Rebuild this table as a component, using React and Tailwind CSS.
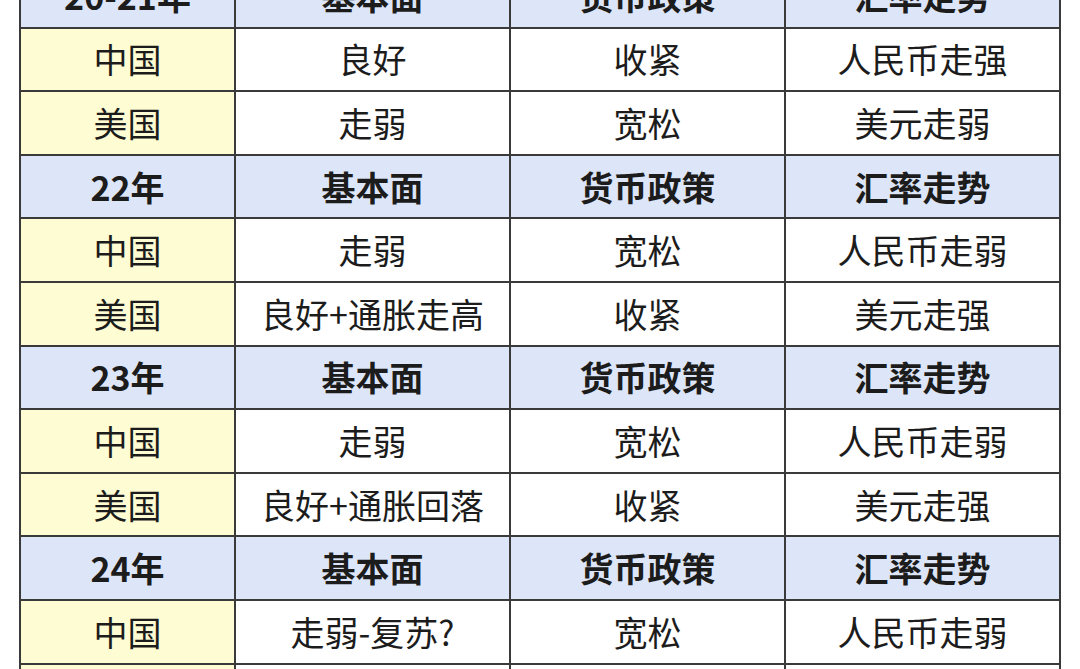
import React from 'react';

const SECTIONS = [
  { year: '20-21年', rows: [['中国', '良好', '收紧', '人民币走强'], ['美国', '走弱', '宽松', '美元走弱']] },
  { year: '22年', rows: [['中国', '走弱', '宽松', '人民币走弱'], ['美国', '良好+通胀走高', '收紧', '美元走强']] },
  { year: '23年', rows: [['中国', '走弱', '宽松', '人民币走弱'], ['美国', '良好+通胀回落', '收紧', '美元走强']] },
  { year: '24年', rows: [['中国', '走弱-复苏?', '宽松', '人民币走弱'], ['美国', '', '', '']] },
];

const HEADERS = ['基本面', '货币政策', '汇率走势'];

const cell = 'border-2 border-[#3a3a3a] h-[63.6px] p-0 text-center align-middle';

export default function App() {
  return (
    <div
      className="w-[1080px] h-[669px] overflow-hidden bg-white text-[#1c1c1c]"
      style={{ fontFamily: '"Noto Sans CJK SC", "Noto Sans", sans-serif' }}
    >
      <div className="pl-[19px] -mt-[37px]">
        <table className="border-collapse table-fixed w-[1040px] text-[34px] leading-none">
          <colgroup>
            <col className="w-[215px]" />
            <col className="w-[275px]" />
            <col className="w-[275px]" />
            <col className="w-[275px]" />
          </colgroup>
          <tbody>
            {SECTIONS.map((s) => (
              <React.Fragment key={s.year}>
                <tr className="bg-[#dde6f8] font-bold">
                  <td className={cell}>{s.year}</td>
                  {HEADERS.map((h) => (
                    <td key={h} className={cell}>{h}</td>
                  ))}
                </tr>
                {s.rows.map((r, i) => (
                  <tr key={i}>
                    <td className={`${cell} bg-[#fefcd2]`}>{r[0]}</td>
                    <td className={`${cell} bg-white`}>{r[1]}</td>
                    <td className={`${cell} bg-white`}>{r[2]}</td>
                    <td className={`${cell} bg-white`}>{r[3]}</td>
                  </tr>
                ))}
              </React.Fragment>
            ))}
          </tbody>
        </table>
      </div>
    </div>
  );
}
